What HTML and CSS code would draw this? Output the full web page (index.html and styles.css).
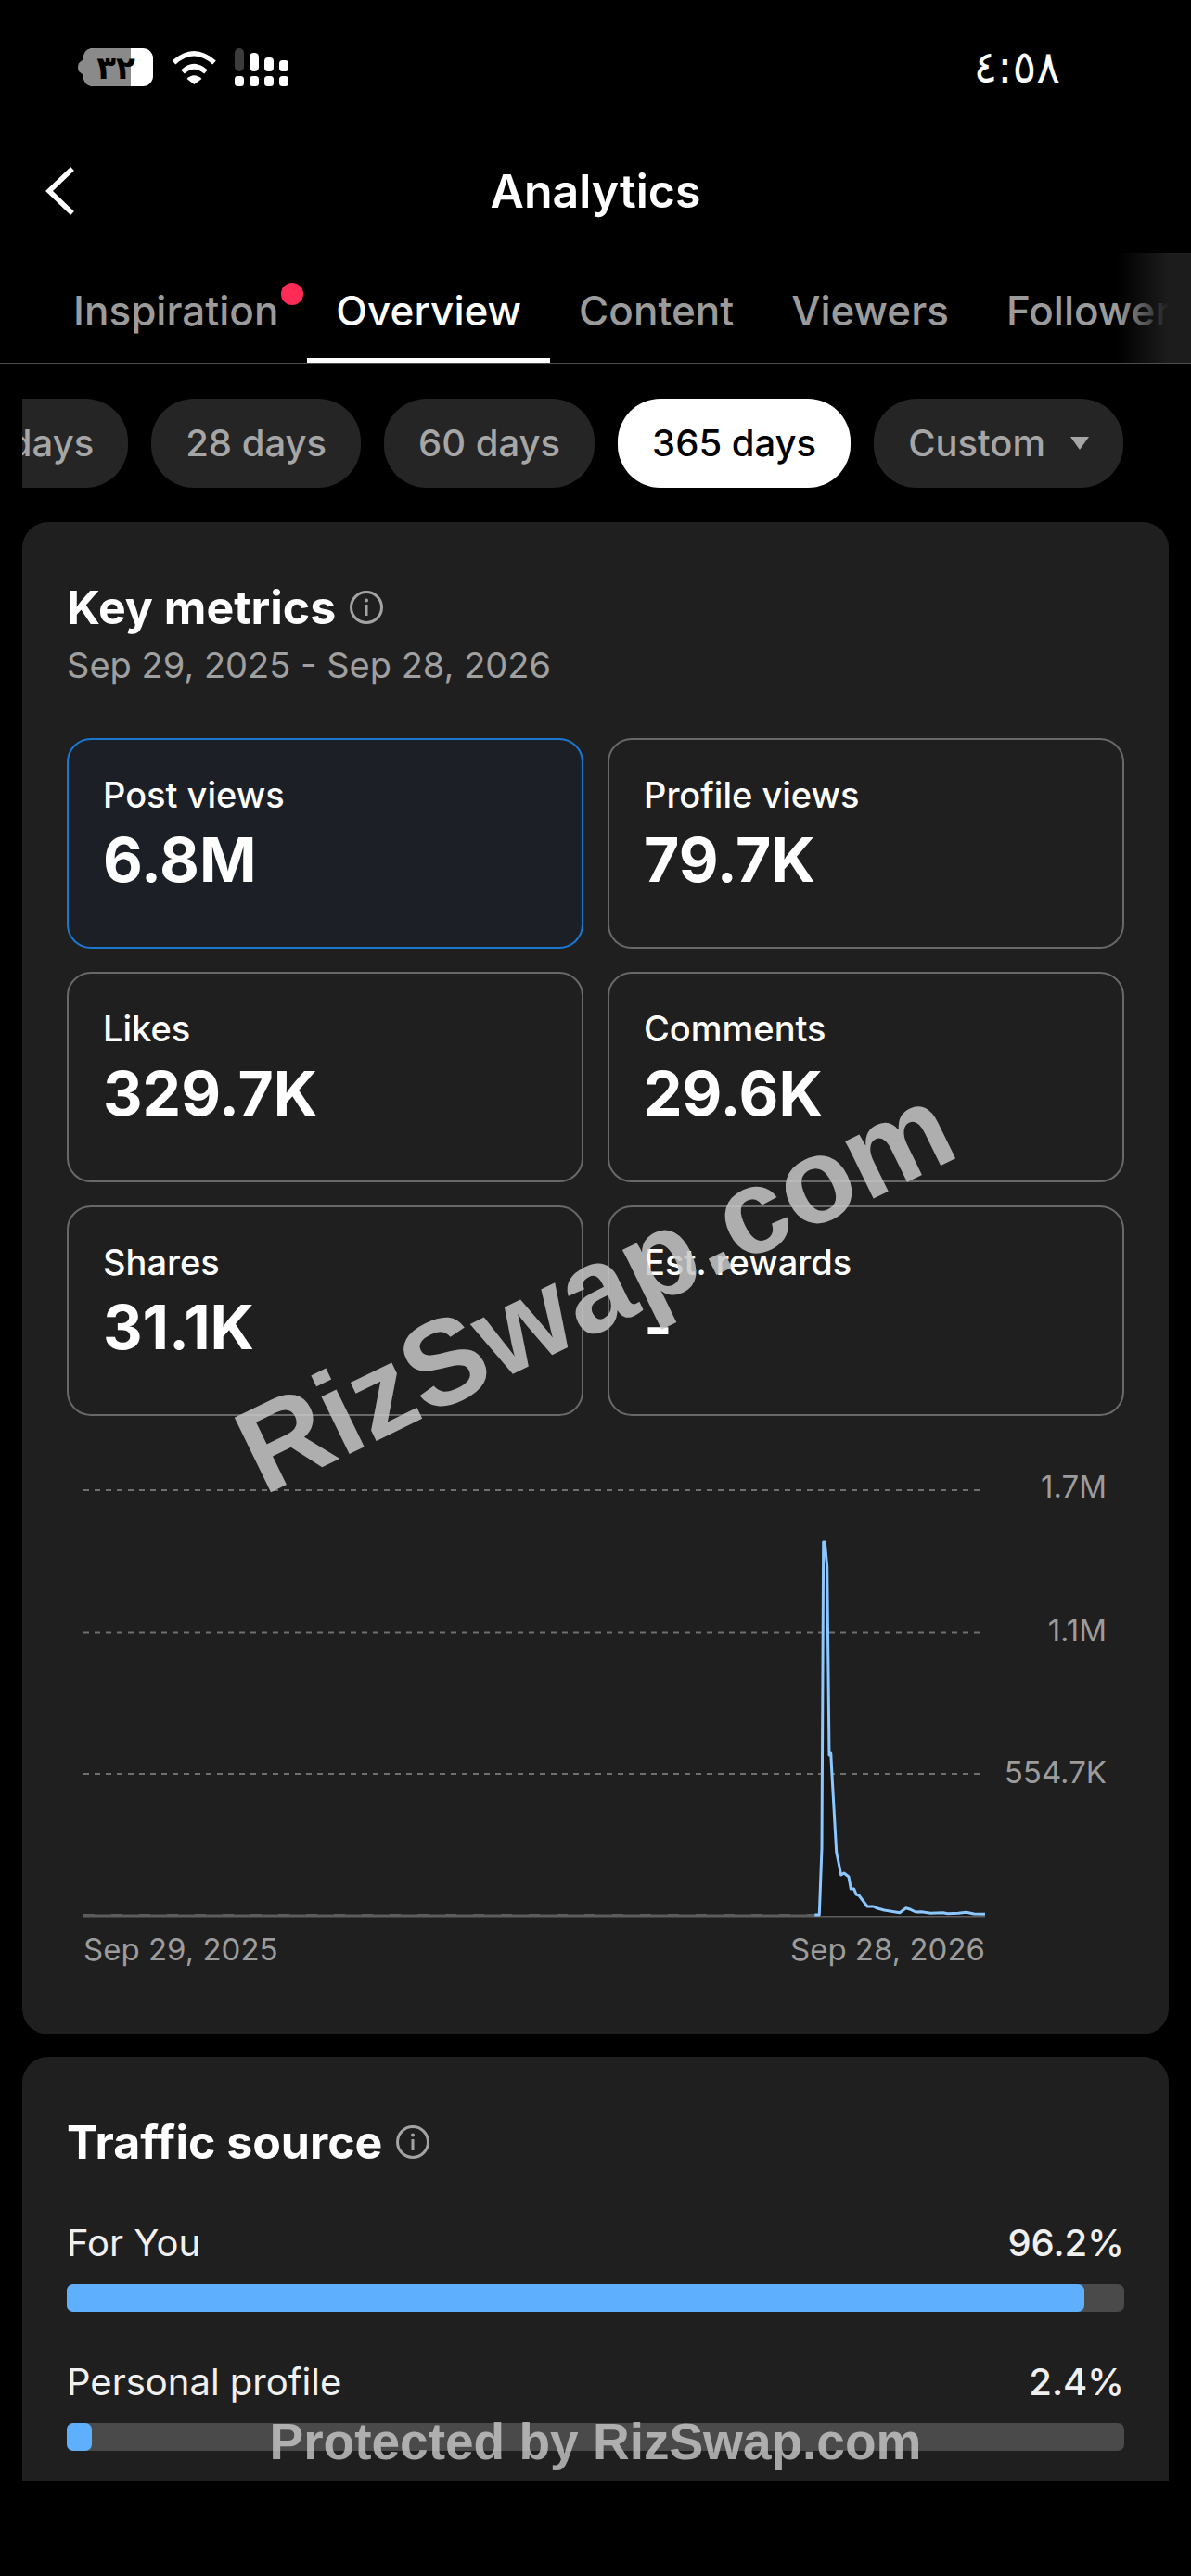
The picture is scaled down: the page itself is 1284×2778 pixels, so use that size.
FILE: index.html
```html
<!DOCTYPE html>
<html lang="en">
<head>
    <meta charset="UTF-8">
    <meta name="viewport" content="width=device-width, initial-scale=1.0">
    <title>Analytics</title>
    <link rel="stylesheet" href="styles.css">
</head>
<body>
    <div class="status-bar">
        <div class="status-icons">
            <svg class="battery" width="82" height="41" viewBox="0 0 82 41">
                <path d="M7 12 L2 16 Q0 20.500 2 25 L7 29 Z" fill="#8a8a8a"/>
                <rect x="7" y="0" width="75" height="41" rx="11" fill="#fff"/>
                <path d="M18 0 H58 V41 H18 Q7 41 7 30 V11 Q7 0 18 0 Z" fill="#8a8a8a"/>
                <text class="battery-text" x="42" y="33" text-anchor="middle">٣٢</text>
            </svg>
            <svg width="50" height="37" viewBox="0 0 50 37">
                <path d="M3.500 13.500 Q25 -6 47 13.500" fill="none" stroke="#fff" stroke-width="5.500"/>
                <path d="M13 23.500 Q25 12 38 23.500" fill="none" stroke="#fff" stroke-width="5.500"/>
                <path d="M17.500 31 Q25 23.500 33.500 31 L25.300 37 Z" fill="#fff"/>
            </svg>
            <svg width="58" height="41" viewBox="0 0 58 41">
                <rect x="0" y="0" width="10" height="25" rx="5" fill="#3b3b3b"/>
                <rect x="16" y="5" width="10" height="20" rx="4.500" fill="#fff"/>
                <rect x="32" y="10" width="10" height="15" rx="4" fill="#fff"/>
                <rect x="48" y="13" width="10" height="12" rx="3.500" fill="#fff"/>
                <rect x="0" y="30" width="10" height="11" rx="3.500" fill="#fff"/>
                <rect x="16" y="30" width="10" height="11" rx="3.500" fill="#fff"/>
                <rect x="32" y="30" width="10" height="11" rx="3.500" fill="#fff"/>
                <rect x="48" y="30" width="10" height="11" rx="3.500" fill="#fff"/>
            </svg>
        </div>
        <div class="status-time">٤:٥٨</div>
    </div>

    <div class="nav-bar">
        <svg class="back-icon" width="34" height="54" viewBox="0 0 34 54">
            <path d="M30 3 L5 27 L30 51" fill="none" stroke="#fff" stroke-width="5.500"/>
        </svg>
        <h1 class="nav-title">Analytics</h1>
    </div>

    <div class="tabs">
        <div class="tab">Inspiration<span class="tab-dot"></span></div>
        <div class="tab tab-active">Overview</div>
        <div class="tab">Content</div>
        <div class="tab">Viewers</div>
        <div class="tab">Followers</div>
        <div class="tabs-fade"></div>
    </div>

    <div class="pills">
        <div class="pill">7 days</div>
        <div class="pill">28 days</div>
        <div class="pill">60 days</div>
        <div class="pill pill-active">365 days</div>
        <div class="pill pill-custom">Custom<span class="caret"></span></div>
    </div>

    <main class="content">
        <section class="card">
            <h2 class="card-title">Key metrics
                <svg class="info-icon" width="38" height="38" viewBox="0 0 38 38">
                    <circle cx="19" cy="19" r="16.500" fill="none" stroke="#a3a3a3" stroke-width="3"/>
                    <circle cx="19" cy="11.500" r="2" fill="#a3a3a3"/>
                    <rect x="17.500" y="16" width="3" height="12" fill="#a3a3a3"/>
                </svg>
            </h2>
            <p class="card-sub">Sep 29, 2025 - Sep 28, 2026</p>

            <div class="metrics">
                <div class="metric metric-active"><div class="metric-label">Post views</div><div class="metric-value">6.8M</div></div>
                <div class="metric"><div class="metric-label">Profile views</div><div class="metric-value">79.7K</div></div>
                <div class="metric"><div class="metric-label">Likes</div><div class="metric-value">329.7K</div></div>
                <div class="metric"><div class="metric-label">Comments</div><div class="metric-value">29.6K</div></div>
                <div class="metric"><div class="metric-label">Shares</div><div class="metric-value">31.1K</div></div>
                <div class="metric"><div class="metric-label">Est. rewards</div><div class="metric-value">-</div></div>
            </div>

            <svg class="chart" width="1140" height="540" viewBox="0 0 1140 540">
                <g class="chart-grid">
                    <line x1="18" y1="17" x2="990" y2="17"/>
                    <line x1="18" y1="170.500" x2="990" y2="170.500"/>
                    <line x1="18" y1="323" x2="990" y2="323"/>
                </g>
                <line x1="18" y1="476" x2="990" y2="476" stroke="#5c5c5c" stroke-width="3"/>
                <line x1="18" y1="474.500" x2="806" y2="474.500" stroke="#5c5c5c" stroke-width="1" stroke-dasharray="12 18"/>
                <path d="M811.300 475 L814 403 L815.700 73 L817.300 73 L819.700 100 L822 303 L823.700 300 L825.300 330 L829.700 407 L834.700 432 L838 430 L843 434 L845.300 447 L848.700 447 L851 453 L854 454 L863 466 L869.700 466 L873 467.700 L881.300 470 L898 472.700 L904.700 467.700 L909.700 469.300 L915.300 472 L921.300 471.700 L931.300 473.300 L944.700 472.700 L949.700 473.700 L961.300 473.300 L969.700 472.300 L978 474 L990 474.300 L990 476 L811.300 476 Z" fill="#161616"/>
                <path class="chart-line" d="M806.300 475 L811.300 475 L814 403 L815.700 73 L817.300 73 L819.700 100 L822 303 L823.700 300 L825.300 330 L829.700 407 L834.700 432 L838 430 L843 434 L845.300 447 L848.700 447 L851 453 L854 454 L863 466 L869.700 466 L873 467.700 L881.300 470 L898 472.700 L904.700 467.700 L909.700 469.300 L915.300 472 L921.300 471.700 L931.300 473.300 L944.700 472.700 L949.700 473.700 L961.300 473.300 L969.700 472.300 L978 474 L990 474.300"/>
                <g class="chart-text">
                    <text x="1121" y="25" text-anchor="end">1.7M</text>
                    <text x="1121" y="180" text-anchor="end">1.1M</text>
                    <text x="1121" y="333" text-anchor="end">554.7K</text>
                    <text x="18" y="524">Sep 29, 2025</text>
                    <text x="990" y="524" text-anchor="end">Sep 28, 2026</text>
                </g>
            </svg>
        </section>

        <section class="card card-traffic">
            <h2 class="card-title">Traffic source
                <svg class="info-icon" width="38" height="38" viewBox="0 0 38 38">
                    <circle cx="19" cy="19" r="16.500" fill="none" stroke="#a3a3a3" stroke-width="3"/>
                    <circle cx="19" cy="11.500" r="2" fill="#a3a3a3"/>
                    <rect x="17.500" y="16" width="3" height="12" fill="#a3a3a3"/>
                </svg>
            </h2>
            <div class="source">
                <div class="source-row"><span>For You</span><span class="source-pct">96.2%</span></div>
                <div class="bar"><div class="bar-fill" style="width: 96.2%"></div></div>
            </div>
            <div class="source">
                <div class="source-row"><span>Personal profile</span><span class="source-pct">2.4%</span></div>
                <div class="bar"><div class="bar-fill" style="width: 2.4%"></div></div>
            </div>
        </section>
    </main>

    <div class="watermark">RizSwap.com</div>
    <div class="protected">Protected by RizSwap.com</div>
</body>
</html>
```

FILE: styles.css
```css
* { box-sizing: border-box; }
html, body { margin: 0; padding: 0; }
body { width: 1284px; height: 2778px; background: #000; color: #fff; font-family: Inter, "Noto Sans", sans-serif; position: relative; overflow: hidden; }

.status-bar { height: 144px; padding: 0 141px 0 83px; display: flex; justify-content: space-between; align-items: center; }
.status-icons { display: flex; align-items: center; gap: 19px; }
.status-time { font-family: "DejaVu Sans", sans-serif; font-size: 48px; font-weight: 500; line-height: 48px; direction: ltr; }
.battery-text { font-family: "DejaVu Sans", sans-serif; font-size: 34px; font-weight: 700; fill: #000; }

.nav-bar { height: 124px; position: relative; display: flex; align-items: center; justify-content: center; }
.nav-title { margin: 0; font-size: 50px; font-weight: 600; line-height: 60px; }
.back-icon { position: absolute; left: 48px; top: 35px; }

.tabs { height: 125px; padding: 10px 0 0 48px; display: flex; border-bottom: 1px solid #4d4d4d; position: relative; overflow: hidden; }
.tab { padding: 0 31px; font-size: 44px; font-weight: 500; line-height: 114px; color: #9b9b9b; position: relative; white-space: nowrap; flex: none; }
.tab-active { color: #fff; box-shadow: inset 0 -6px 0 #fff; }
.tab-dot { position: absolute; left: 255px; top: 27px; width: 24px; height: 24px; border-radius: 50%; background: #fe2c55; }
.tabs-fade { position: absolute; right: 0; top: 5px; bottom: 0; width: 80px; background: linear-gradient(to right, rgba(28, 28, 28, 0), #1c1c1c 70%); }

.pills { margin: 37px 0 37px 24px; height: 96px; display: flex; justify-content: flex-end; gap: 25px; padding-right: 73px; overflow: hidden; }
.pill { flex: none; height: 96px; padding: 0 37px; border-radius: 46px; background: #252525; color: #a6a6a6; font-size: 40px; font-weight: 500; line-height: 96px; white-space: nowrap; }
.pill-active { background: #fff; color: #000; }
.pill-custom { display: flex; align-items: center; gap: 27px; }
.caret { width: 0; height: 0; border-left: 10px solid transparent; border-right: 10px solid transparent; border-top: 14px solid #a6a6a6; }

.content { height: 2113px; overflow: hidden; }
.card { margin: 0 24px; padding: 62px 48px 64px; background: #1f1f1f; border-radius: 28px; }
.card-traffic { margin-top: 24px; padding-bottom: 100px; border-radius: 28px 28px 0 0; }
.card-title { margin: 0; display: flex; align-items: center; gap: 14px; font-size: 50px; font-weight: 700; line-height: 60px; }
.card-sub { margin: 8px 0 0; font-size: 38px; line-height: 48px; color: #a0a0a0; }

.metrics { margin-top: 55px; display: grid; grid-template-columns: 1fr 1fr; grid-auto-rows: 227px; gap: 25px 26px; }
.metric { padding: 34px 37px; border: 2px solid #686868; border-radius: 26px; }
.metric-active { background: #1c2026; border-color: #1a78d2; }
.metric-label { font-size: 38px; font-weight: 500; line-height: 50px; }
.metric-value { margin-top: 5px; font-size: 66px; font-weight: 700; line-height: 80px; }

.chart { display: block; margin-top: 63px; }
.chart-grid line { stroke: #6f6f6f; stroke-width: 2; stroke-dasharray: 6 6; }
.chart-line { fill: none; stroke: #8cc8ff; stroke-width: 3; stroke-linejoin: round; }
.chart-text text { font-size: 33px; fill: #9c9c9c; }

.source { margin-top: 54px; }
.source + .source { margin-top: 51px; }
.source-row { display: flex; justify-content: space-between; font-size: 40px; line-height: 50px; color: #f0f0f0; }
.source-pct { font-weight: 500; }
.bar { margin-top: 19px; height: 30px; border-radius: 7px; background: #4a4a4a; }
.bar-fill { height: 100%; border-radius: 7px; background: #5eb0ff; }

.watermark { position: absolute; left: 641px; top: 1389px; transform: translate(-50%, -50%) rotate(-26deg); font-family: "Liberation Sans", sans-serif; font-size: 130px; font-weight: 700; line-height: 1; white-space: nowrap; color: rgba(200, 200, 200, 0.85); }
.protected { position: absolute; left: 0; right: 0; top: 2600px; text-align: center; font-family: "Liberation Sans", sans-serif; font-size: 55px; font-weight: 700; line-height: 66px; color: rgba(200, 200, 200, 0.8); }
```
